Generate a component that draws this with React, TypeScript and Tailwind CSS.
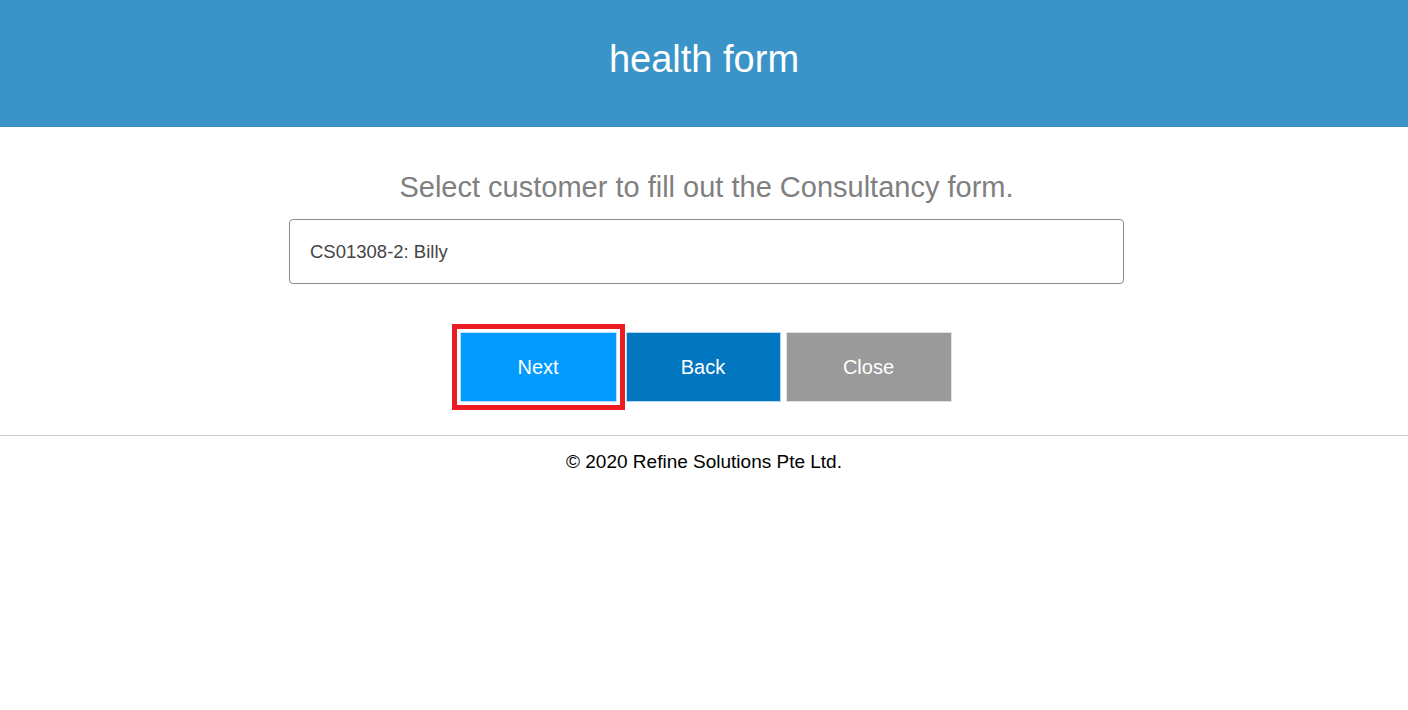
import React from "react";

export default function App() {
  return (
    <div className="min-h-[710px] bg-white font-['Liberation_Sans',Arial,sans-serif]">
      <header className="h-[127px] bg-[#3a94c8] pt-[40px]">
        <h1 className="text-center text-[38px] leading-none text-white font-normal">health form</h1>
      </header>

      <main className="flex flex-col items-center pl-[5px]">
        <p className="mt-[46px] text-[29px] leading-none text-[#808080]">
          Select customer to fill out the Consultancy form.
        </p>

        <div className="mt-[17px] flex h-[65px] w-[835px] items-center rounded-[4px] border border-[#8c8c8c] pl-[20px] text-[18.5px] text-[#444]">
          CS01308-2: Billy
        </div>

        <div className="mt-[48px] mr-[2px] flex h-[70px] items-stretch">
          <button className="w-[157px] border border-white/70 bg-[#039bff] text-[20px] text-white outline-[5px] outline-solid outline-[#ec1c24] outline-offset-[3px]">
            Next
          </button>
          <button className="ml-[9px] w-[155px] border border-white/70 bg-[#0277bf] text-[20px] text-white">
            Back
          </button>
          <button className="ml-[5px] w-[166px] border border-white/70 bg-[#9a9a9a] text-[20px] text-white">
            Close
          </button>
        </div>
      </main>

      <footer className="mt-[33px] border-t border-[#cccccc] pt-[16px] text-center">
        <p className="text-[19px] leading-none text-black">© 2020 Refine Solutions Pte Ltd.</p>
      </footer>
    </div>
  );
}
